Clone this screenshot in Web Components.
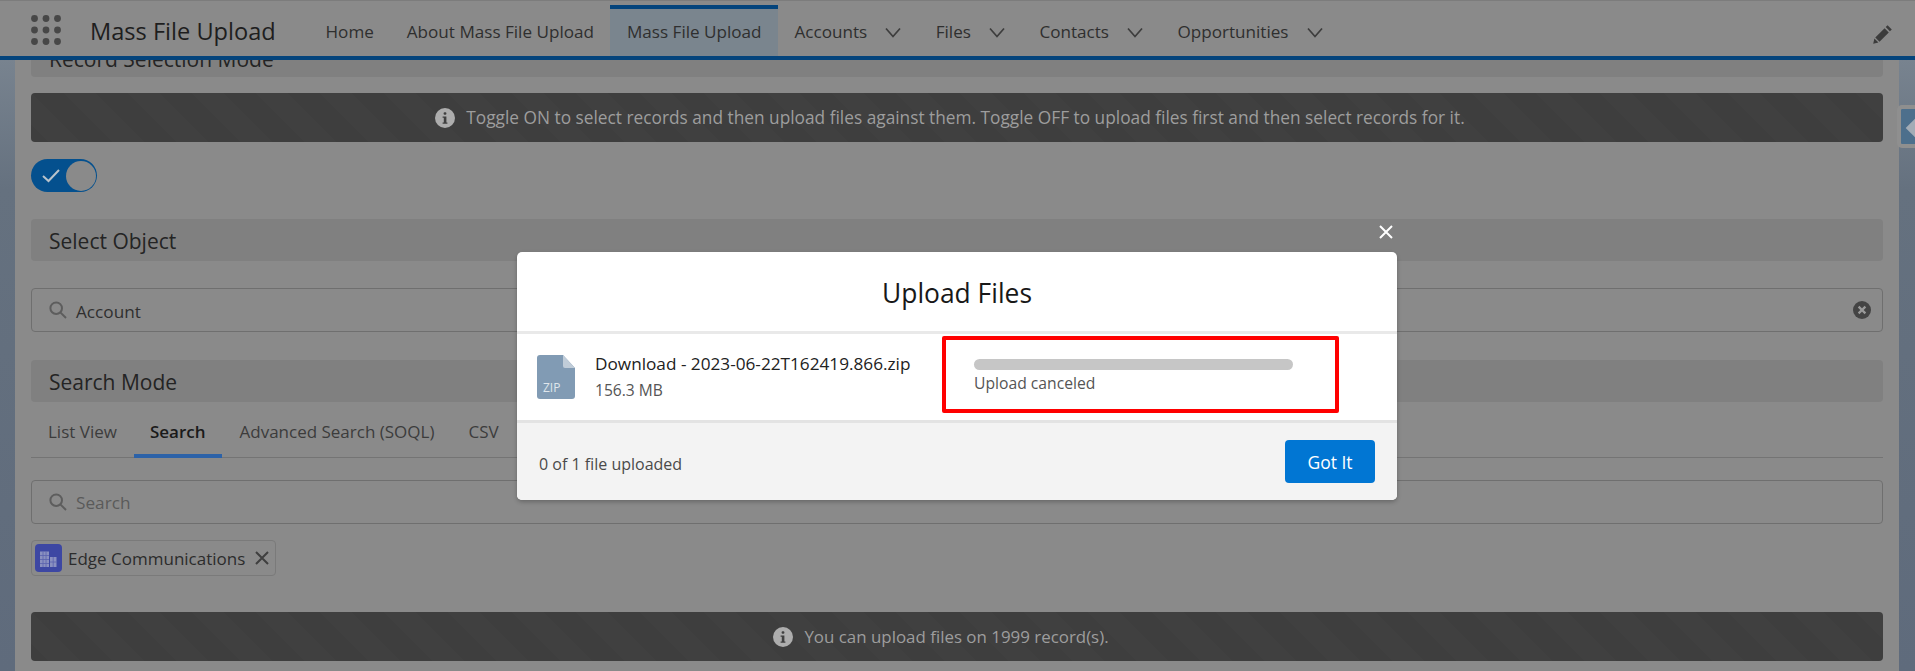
<!DOCTYPE html>
<html>
<head>
<meta charset="utf-8">
<title>Mass File Upload</title>
<style>
  html, body { margin: 0; padding: 0; height: 100%; overflow: hidden; background: #8a8a8a; }
  body { font-family: "Open Sans", "Liberation Sans", sans-serif; }
  .gap-16 { margin-top: 16px; }
  .gap-17 { margin-top: 17px; }
  .gap-27 { margin-top: 27px; }
  .gap-28 { margin-top: 28px; }
  .gap-1 { margin-top: 1px; }
  .gap-22 { margin-top: 22px; }
  .gap-36 { margin-top: 36px; }
  /* content is scrolled a little, the first title slides under the header */
  .scrolled { margin-top: -25px; height: 28px; padding-top: 14px; line-height: 20px; }
  .wide-note { font-size: 17.3px; padding-right: 14px; }
  .short-note { font-size: 16.9px; padding-right: 32px; }
</style>
</head>
<body>

<app-shell>
  <nav-bar slot="nav"></nav-bar>

  <section-title class="scrolled">Record Selection Mode</section-title>
  <info-banner class="gap-16 wide-note">Toggle ON to select records and then upload files against them. Toggle OFF to upload files first and then select records for it.</info-banner>
  <toggle-switch class="gap-17"></toggle-switch>
  <section-title class="gap-27">Select Object</section-title>
  <search-box class="gap-27" value="Account" clearable></search-box>
  <section-title class="gap-28">Search Mode</section-title>
  <tab-bar class="gap-1"></tab-bar>
  <search-box class="gap-22" placeholder="Search"></search-box>
  <record-pill class="gap-16">Edge Communications</record-pill>
  <info-banner class="gap-36 short-note">You can upload files on 1999 record(s).</info-banner>

  <upload-modal slot="overlay"></upload-modal>
</app-shell>

<script>
function define(name, html, setup) {
  const tpl = document.createElement("template");
  tpl.innerHTML = html;
  customElements.define(name, class extends HTMLElement {
    constructor() {
      super();
      this.attachShadow({mode: "open"}).appendChild(tpl.content.cloneNode(true));
    }
    connectedCallback() {
      if (setup) setup(this, this.shadowRoot);
    }
  });
}

define("app-shell", `
  <style>
    :host { display: flex; flex-direction: column; height: 671px; position: relative; overflow: hidden; background: #8a8a8a; }
    .body { flex: 1; display: flex; min-height: 0; }
    .stripe { width: 15px; flex: none; background: linear-gradient(#78838f, #65717f 130px, #5f6b7c); }
    .stripe.right { width: 16px; }
    main { flex: 1; min-width: 0; padding: 0 16px; overflow: hidden; display: flex; flex-direction: column; }
    .handle { position: absolute; left: 1897px; top: 105px; width: 18px; height: 43px; box-sizing: border-box; border: 4px solid #8f8f8f; border-right: 0; border-radius: 5px 0 0 5px; background: #4d6f8c; overflow: hidden; }
    .handle::after { content: ""; position: absolute; left: 8px; top: 11px; width: 16px; height: 16px; background: #a3acb6; transform: rotate(45deg); }
  </style>
  <slot name="nav"></slot>
  <div class="body">
    <div class="stripe"></div>
    <main><slot></slot></main>
    <div class="stripe right"></div>
  </div>
  <div class="handle"></div>
  <slot name="overlay"></slot>
`);

define("nav-bar", `
  <style>
    :host { display: flex; align-items: stretch; height: 60px; box-sizing: border-box; background: #8a8a8a; border-top: 1px solid #7c7c7c; border-bottom: 4px solid #04447c; position: relative; z-index: 2; color: #2b2b2b; }
    .dots { margin: 14px 0 0 31px; width: 30px; height: 30px; flex: none; }
    .name { margin: 14px 0 0 29px; width: 219px; height: 32px; font-size: 23.6px; line-height: 32px; color: #1e1e1e; white-space: nowrap; }
    .links { display: flex; }
    .pencil { margin: 23px 22px 0 auto; width: 20px; height: 20px; }
  </style>
  <svg class="dots" viewBox="0 0 30 30" fill="#474747">
    <circle cx="3.500" cy="3.500" r="3.400"/><circle cx="15" cy="3.500" r="3.400"/><circle cx="26.500" cy="3.500" r="3.400"/>
    <circle cx="3.500" cy="15" r="3.400"/><circle cx="15" cy="15" r="3.400"/><circle cx="26.500" cy="15" r="3.400"/>
    <circle cx="3.500" cy="26.500" r="3.400"/><circle cx="15" cy="26.500" r="3.400"/><circle cx="26.500" cy="26.500" r="3.400"/>
  </svg>
  <div class="name">Mass File Upload</div>
  <div class="links">
    <nav-item>Home</nav-item>
    <nav-item>About Mass File Upload</nav-item>
    <nav-item active>Mass File Upload</nav-item>
    <nav-item menu>Accounts</nav-item>
    <nav-item menu>Files</nav-item>
    <nav-item menu>Contacts</nav-item>
    <nav-item menu>Opportunities</nav-item>
  </div>
  <svg class="pencil" viewBox="0 0 20 20" fill="#3c3c3c">
    <path d="M14.600 1.200l4.200 4.200-1.900 1.900-4.200-4.200zM11.600 4.200l4.200 4.200-9.300 9.300-4.200-4.200zM1.400 14.600l4 4-5.200 1.200z"/>
  </svg>
`);

define("nav-item", `
  <style>
    :host { display: flex; align-items: center; padding: 5px 16.500px 0; font-size: 17.1px; white-space: nowrap; position: relative; color: #2f2f2f; }
    :host([active]) { background: #7a858e; margin-top: 8px; padding-top: 0; padding-bottom: 3px; }
    :host([active])::before { content: ""; position: absolute; left: 0; right: 0; top: -4px; height: 4px; background: #04447c; }
    svg { display: none; width: 16px; height: 11px; margin-left: 18px; margin-top: 2px; }
    :host([menu]) svg { display: block; }
    :host([menu]) { padding-right: 18px; }
  </style>
  <slot></slot>
  <svg viewBox="0 0 16 11" fill="none" stroke="#3d3d3d" stroke-width="1.700"><path d="M1 1.500l7 8 7-8"/></svg>
`);

define("section-title", `
  <style>
    :host { display: block; flex: none; height: 42px; line-height: 45px; padding: 0 18px; background: #808080; border-radius: 4px; font-size: 21px; color: #242424; }
  </style>
  <slot></slot>
`);

define("info-banner", `
  <style>
    :host { display: flex; flex: none; align-items: center; justify-content: center; height: 49px; border-radius: 4px; font-size: 17px; color: #9d9d9d;
      background-color: #404040;
      background-image: linear-gradient(45deg, rgba(0,0,0,.025) 25%, transparent 25%, transparent 50%, rgba(0,0,0,.025) 50%, rgba(0,0,0,.025) 75%, transparent 75%, transparent);
      background-size: 64px 64px; }
    svg { width: 20px; height: 20px; margin-right: 11px; flex: none; }
  </style>
  <svg viewBox="0 0 20 20">
    <circle cx="10" cy="10" r="10" fill="#adadad"/>
    <rect x="8.600" y="4.200" width="2.800" height="2.600" rx="1" fill="#404040"/>
    <path d="M7.600 8.400h3.800v6h1v1.400H7.600v-1.400h1.200v-4.600H7.600z" fill="#404040"/>
  </svg>
  <span><slot></slot></span>
`);

define("toggle-switch", `
  <style>
    :host { display: block; flex: none; width: 66px; height: 33px; box-sizing: border-box; border-radius: 17px; background: #04508e; position: relative; }
    .knob { position: absolute; right: 1.500px; top: 1.500px; width: 30px; height: 30px; border-radius: 50%; background: #8a8a8a; }
    svg { position: absolute; left: 11px; top: 9px; width: 18px; height: 15px; }
  </style>
  <svg viewBox="0 0 18 15" fill="none" stroke="#b9c3cb" stroke-width="2"><path d="M1 8l5.500 5L17 2"/></svg>
  <div class="knob"></div>
`);

define("search-box", `
  <style>
    :host { display: flex; flex: none; align-items: center; height: 44px; box-sizing: border-box; border: 1px solid #6f6f6f; border-radius: 4px; padding: 0 11px 0 17px; font-size: 17.2px; color: #2f2f2f; }
    .glass { width: 18px; height: 18px; flex: none; margin-right: 9px; }
    .val { flex: 1; padding-top: 1px; }
    :host([clearable]) .val { padding-top: 3px; }
    .val.placeholder { color: #5a5a5a; }
    .clear { display: none; width: 18px; height: 18px; flex: none; }
    :host([clearable]) .clear { display: block; }
  </style>
  <svg class="glass" viewBox="0 0 18 18" fill="none" stroke="#5d5d5d" stroke-width="2"><circle cx="7.200" cy="7.200" r="5.800"/><path d="M11.600 11.600l5.400 5.400"/></svg>
  <span class="val"></span>
  <svg class="clear" viewBox="0 0 18 18">
    <circle cx="9" cy="9" r="9" fill="#444"/>
    <path d="M5.600 5.600l6.800 6.800M12.400 5.600l-6.800 6.800" stroke="#9a9a9a" stroke-width="2.200"/>
  </svg>
`, (el, root) => {
  const val = root.querySelector(".val");
  if (el.hasAttribute("value")) {
    val.textContent = el.getAttribute("value");
  } else {
    val.textContent = el.getAttribute("placeholder") || "";
    val.classList.add("placeholder");
  }
});

define("tab-bar", `
  <style>
    :host { display: flex; flex: none; height: 55px; box-sizing: border-box; border-bottom: 1px solid #747474; font-size: 17px; color: #3c3c3c; }
    .tab { display: flex; align-items: center; padding: 2px 17px 0; height: 55px; box-sizing: border-box; white-space: nowrap; }
    .tab:first-child { padding-right: 16px; }
    .tab.on { font-weight: 600; color: #1a1a1a; border-bottom: 4px solid #2c62a8; padding-top: 6px; }
    .tab:nth-child(3) { padding-left: 16px; }
  </style>
  <div class="tab">List View</div>
  <div class="tab on">Search</div>
  <div class="tab">Advanced Search (SOQL)</div>
  <div class="tab">CSV</div>
`);

define("record-pill", `
  <style>
    :host { display: inline-flex; flex: none; align-self: flex-start; align-items: center; height: 36px; box-sizing: border-box; border: 1px solid #7a7a7a; border-radius: 4px; padding: 0 6px 0 3px; font-size: 17px; color: #2c2c2c; }
    .icon { width: 27px; height: 28px; flex: none; margin-right: 6px; }
    .x { width: 14px; height: 14px; flex: none; margin-left: 10px; }
  </style>
  <svg class="icon" viewBox="0 0 27 28">
    <rect width="27" height="28" rx="4" fill="#3d47a3"/>
    <path d="M5 7.500h9V23H5zM15 13h6.500v10H15z" fill="#8a90c0"/>
    <path d="M8 7.500V23M11 7.500V23M5 11.500h9M5 15.500h9M5 19.500h9M18.200 13v10M15 18h6.500" stroke="#5a62ad" stroke-width=".8"/>
  </svg>
  <span><slot></slot></span>
  <svg class="x" viewBox="0 0 14 14" fill="none" stroke="#3f3f3f" stroke-width="2"><path d="M1 1l12 12M13 1L1 13"/></svg>
`);

define("upload-modal", `
  <style>
    :host { display: block; position: absolute; left: 517px; top: 252px; width: 880px; z-index: 5; color: #181818; }
    .close { position: absolute; right: 4px; top: -27px; width: 14px; height: 14px; }
    .card { background: #fff; border-radius: 5px; overflow: hidden; box-shadow: 0 2px 4px rgba(0,0,0,.25); }
    .head { height: 79px; line-height: 82px; text-align: center; font-size: 26.4px; border-bottom: 3px solid #e9e9e9; }
    .row { height: 86px; display: flex; align-items: flex-start; position: relative; }
    .file { position: relative; width: 38px; height: 44px; margin: 21px 0 0 20px; flex: none; }
    .file svg { display: block; width: 38px; height: 44px; }
    .file span { position: absolute; left: 6px; bottom: 5px; font-size: 12px; line-height: 12px; color: #dfe6ec; }
    .info { margin: 18px 0 0 20px; width: 340px; flex: none; }
    .fname { font-size: 17.2px; line-height: 24px; white-space: nowrap; color: #222; }
    .fsize { font-size: 15.6px; line-height: 24px; margin-top: 2px; color: #555; }
    .state { margin: 25px 0 0 39px; width: 319px; flex: none; }
    .bar { height: 11px; border-radius: 6px; background: #c6c6c6; }
    .label { font-size: 15.7px; line-height: 22px; margin-top: 2px; color: #555; }
    .mark { position: absolute; left: 425px; top: 2px; width: 397px; height: 77px; box-sizing: border-box; border: 4.500px solid #f00; border-radius: 2px; }
    .foot { height: 80px; box-sizing: border-box; border-top: 3px solid #e3e3e3; background: #f3f3f3; display: flex; align-items: center; justify-content: space-between; padding: 0 22px; font-size: 16px; color: #4a4a4a; }
    .foot span { margin-top: 5px; }
    .btn { width: 90px; height: 43px; border-radius: 4px; background: #0176d3; color: #fff; font-size: 17.500px; display: flex; align-items: center; justify-content: center; }
  </style>
  <svg class="close" viewBox="0 0 14 14" fill="none" stroke="#fff" stroke-width="2"><path d="M1 1l12 12M13 1L1 13"/></svg>
  <div class="card">
    <div class="head">Upload Files</div>
    <div class="row">
      <div class="file">
        <svg viewBox="0 0 38 44">
          <path d="M3 0h23l12 13v28a3 3 0 0 1-3 3H3a3 3 0 0 1-3-3V3a3 3 0 0 1 3-3z" fill="#819bb4"/>
          <path d="M26 0l12 13H28a2 2 0 0 1-2-2z" fill="#c0ccd8"/>
        </svg>
        <span>ZIP</span>
      </div>
      <div class="info">
        <div class="fname">Download - 2023-06-22T162419.866.zip</div>
        <div class="fsize">156.3 MB</div>
      </div>
      <div class="state">
        <div class="bar"></div>
        <div class="label">Upload canceled</div>
      </div>
      <div class="mark"></div>
    </div>
    <div class="foot">
      <span>0 of 1 file uploaded</span>
      <div class="btn">Got It</div>
    </div>
  </div>
`);
</script>
</body>
</html>
